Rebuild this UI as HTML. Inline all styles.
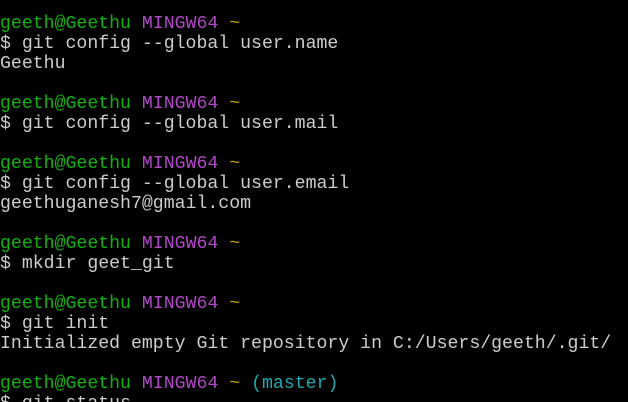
<!DOCTYPE html>
<html><head><style>
html,body{margin:0;padding:0;background:#000;width:628px;height:402px;overflow:hidden}
pre{margin:0;padding:14px 0 0 0;font-family:"Liberation Mono",monospace;font-size:18.2px;line-height:20px;color:#cccccc;white-space:pre}
.g{color:#13b010}.p{color:#b148c6}.y{color:#c19c00}.c{color:#1fa8b0}
</style></head><body><pre><span class="g">geeth@Geethu</span> <span class="p">MINGW64</span> <span class="y">~</span>
$ git config --global user.name
Geethu

<span class="g">geeth@Geethu</span> <span class="p">MINGW64</span> <span class="y">~</span>
$ git config --global user.mail

<span class="g">geeth@Geethu</span> <span class="p">MINGW64</span> <span class="y">~</span>
$ git config --global user.email
geethuganesh7@gmail.com

<span class="g">geeth@Geethu</span> <span class="p">MINGW64</span> <span class="y">~</span>
$ mkdir geet_git

<span class="g">geeth@Geethu</span> <span class="p">MINGW64</span> <span class="y">~</span>
$ git init
Initialized empty Git repository in C:/Users/geeth/.git/

<span class="g">geeth@Geethu</span> <span class="p">MINGW64</span> <span class="y">~</span> <span class="c">(master)</span>
$ git status
</pre></body></html>
